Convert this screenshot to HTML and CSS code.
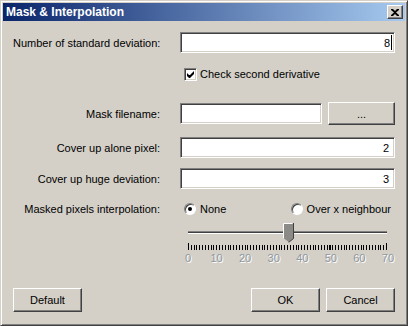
FILE: index.html
```html
<!DOCTYPE html>
<html lang="en">
<head>
    <meta charset="UTF-8">
    <title>Mask &amp; Interpolation</title>
    <link rel="stylesheet" href="styles.css">
</head>
<body>
    <div class="window">
        <div class="titlebar">
            <span class="title">Mask &amp; Interpolation</span>
            <button class="close">
                <svg width="8" height="7" viewBox="0 0 8 7"><path d="M0 0h2l2 2 2-2h2v1l-3 2.5 3 2.5v1h-2l-2-2-2 2h-2v-1l3-2.5-3-2.5z" fill="#000"/></svg>
            </button>
        </div>
        <div class="content">
            <div class="row row-std">
                <label>Number of standard deviation:</label>
                <div class="edit">8<span class="caret"></span></div>
            </div>
            <div class="row row-check">
                <span></span>
                <div class="check">
                    <span class="box">
                        <svg width="7" height="7" viewBox="0 0 7 7"><path d="M0 2v3l2 2h1l4-4v-3l-4 4h-1z" fill="#000"/></svg>
                    </span>
                    Check second derivative
                </div>
            </div>
            <div class="row row-mask">
                <label>Mask filename:</label>
                <div class="file">
                    <div class="edit file-edit"></div>
                    <button class="btn browse">...</button>
                </div>
            </div>
            <div class="row row-alone">
                <label>Cover up alone pixel:</label>
                <div class="edit">2</div>
            </div>
            <div class="row row-huge">
                <label>Cover up huge deviation:</label>
                <div class="edit">3</div>
            </div>
            <div class="row row-radio">
                <label>Masked pixels interpolation:</label>
                <div class="radios">
                    <div class="radio"><span class="dot checked"></span>None</div>
                    <div class="radio radio-right"><span class="dot"></span>Over x neighbour</div>
                </div>
            </div>
            <div class="row row-slider">
                <span></span>
                <div class="slider">
                    <div class="track"></div>
                    <svg class="thumb" width="11" height="20" viewBox="0 0 11 20">
                        <path d="M0.5 0.5h10v15l-5 4-5-4z" fill="#8c8a86"/>
                        <path d="M0.5 15.5v-15h9" stroke="#fff" fill="none"/>
                        <path d="M10.5 0v15.5l-5 4" stroke="#404040" fill="none"/>
                        <path d="M0.5 15.5l5 4" stroke="#d4d0c8" fill="none"/>
                    </svg>
                    <div class="ticks"></div>
                    <div class="scale">
                        <span>0</span><span>10</span><span>20</span><span>30</span>
                        <span>40</span><span>50</span><span>60</span><span>70</span>
                    </div>
                </div>
            </div>
            <div class="buttons">
                <button class="btn">Default</button>
                <span class="spacer"></span>
                <button class="btn">OK</button>
                <button class="btn">Cancel</button>
            </div>
        </div>
    </div>
</body>
</html>
```

FILE: styles.css
```css
body {
    margin: 0;
    font-family: "Liberation Sans", Arial, sans-serif;
    font-size: 11px;
    color: #000;
    background: #d4d0c8;
}
.window {
    width: 408px;
    height: 326px;
    box-sizing: border-box;
    background: #d4d0c8;
    border: 1px solid;
    border-color: #d4d0c8 #404040 #404040 #d4d0c8;
    box-shadow: inset 1px 1px 0 #fff, inset -1px -1px 0 #808080;
    padding: 2px;
    display: flex;
    flex-direction: column;
}
.titlebar {
    height: 18px;
    background: linear-gradient(to right, #0a246a, #a6caf0);
    display: flex;
    align-items: center;
    justify-content: space-between;
    padding: 0 2px 0 3px;
}
.title {
    color: #fff;
    font-weight: bold;
    font-size: 12px;
}
.close {
    width: 16px;
    height: 14px;
    padding: 0;
    margin: 0;
    background: #d4d0c8;
    border: 1px solid;
    border-color: #fff #404040 #404040 #fff;
    box-shadow: inset -1px -1px 0 #808080;
    display: flex;
    align-items: center;
    justify-content: center;
}
.content {
    flex: 1;
    display: flex;
    flex-direction: column;
    padding: 11px 10px 0 10px;
}
.row {
    display: grid;
    grid-template-columns: 147px 215px;
    column-gap: 20px;
    align-items: center;
}
.row label {
    text-align: right;
    white-space: nowrap;
}
.edit {
    height: 21px;
    box-sizing: border-box;
    background: #fff;
    border: 1px solid;
    border-color: #808080 #fff #fff #808080;
    box-shadow: inset 1px 1px 0 #404040, inset -1px -1px 0 #d4d0c8;
    display: flex;
    align-items: center;
    justify-content: flex-end;
    padding-right: 5px;
}
.caret {
    width: 1px;
    height: 15px;
    background: #000;
    margin-left: 1px;
    margin-right: -3px;
}
.row-std {
    height: 21px;
}
.row-check {
    height: 20px;
    margin-top: 11px;
}
.check {
    display: flex;
    align-items: center;
    padding-left: 4px;
}
.box {
    width: 13px;
    height: 13px;
    box-sizing: border-box;
    background: #fff;
    border: 1px solid;
    border-color: #808080 #fff #fff #808080;
    box-shadow: inset 1px 1px 0 #404040, inset -1px -1px 0 #d4d0c8;
    display: flex;
    align-items: center;
    justify-content: center;
    margin-right: 3px;
}
.row-mask {
    height: 23px;
    margin-top: 18px;
}
.file {
    display: flex;
    align-items: center;
    gap: 6px;
}
.file-edit {
    width: 142px;
}
.btn {
    height: 24px;
    width: 69px;
    padding: 0;
    font-family: inherit;
    font-size: 11px;
    color: #000;
    background: #d4d0c8;
    border: 1px solid;
    border-color: #fff #404040 #404040 #fff;
    box-shadow: inset -1px -1px 0 #808080;
}
.browse {
    width: 67px;
    height: 23px;
}
.row-alone {
    height: 21px;
    margin-top: 12px;
}
.row-huge {
    height: 21px;
    margin-top: 10px;
}
.row-radio {
    height: 16px;
    margin-top: 12px;
}
.radios {
    display: flex;
    align-items: center;
    padding: 0 4px;
}
.radio {
    display: flex;
    align-items: center;
}
.radio-right {
    margin-left: auto;
}
.dot {
    width: 12px;
    height: 12px;
    box-sizing: border-box;
    border-radius: 50%;
    background: #fff;
    border: 1px solid;
    border-color: #808080 #fff #fff #808080;
    box-shadow: inset 1px 1px 0 #404040;
    margin-right: 4px;
    position: relative;
}
.dot.checked::after {
    content: "";
    position: absolute;
    left: 3px;
    top: 3px;
    width: 4px;
    height: 4px;
    border-radius: 50%;
    background: #000;
}
.row-slider {
    margin-top: 3px;
    height: 45px;
    align-items: start;
}
.slider {
    position: relative;
    height: 45px;
}
.track {
    position: absolute;
    left: 8px;
    top: 11px;
    width: 199px;
    height: 3px;
    border-top: 1px solid #808080;
    background: #404040;
    box-sizing: border-box;
    border-bottom: 1px solid #fff;
}
.thumb {
    position: absolute;
    left: 103px;
    top: 3px;
}
.ticks {
    position: absolute;
    left: 8px;
    top: 25px;
    width: 200px;
    height: 5px;
    background: repeating-linear-gradient(to right, #000 0 1px, transparent 1px 2.83px);
}
.ticks::before,
.ticks::after {
    content: "";
    position: absolute;
    top: -2px;
    width: 1px;
    height: 7px;
    background: #000;
}
.ticks::before {
    left: 0;
}
.ticks::after {
    right: 1px;
}
.scale {
    position: absolute;
    left: -2px;
    top: 32px;
    width: 220px;
    display: flex;
    justify-content: space-between;
    color: #8f979f;
    text-shadow: 1px 1px 0 #fff;
}
.scale span {
    width: 20px;
    text-align: center;
}
.buttons {
    display: flex;
    gap: 6px;
    margin-top: 23px;
}
.spacer {
    flex: 1;
}
```
